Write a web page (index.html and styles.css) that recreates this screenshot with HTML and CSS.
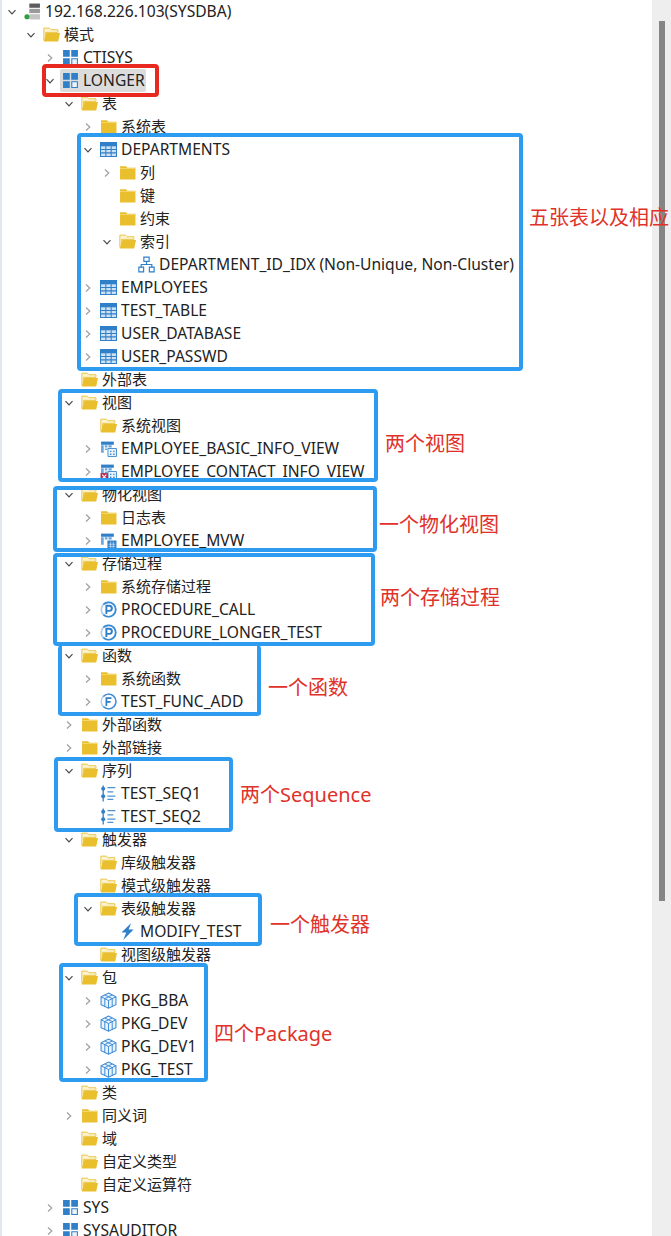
FILE: index.html
```html
<!DOCTYPE html>
<html lang="zh-CN">
<head>
<meta charset="utf-8">
<title>SYSDBA</title>
<link rel="stylesheet" href="styles.css">
</head>
<body>
<svg class="defs" width="0" height="0" aria-hidden="true">
  <symbol id="chev-d" viewBox="0 0 10 10"><path d="M1.5 3.2 5 6.8 8.5 3.2" fill="none" stroke="#4a4a4a" stroke-width="1.2"/></symbol>
  <symbol id="chev-r" viewBox="0 0 10 10"><path d="M3 1.5 6.8 5 3 8.5" fill="none" stroke="#a0a0a0" stroke-width="1.2"/></symbol>
  <symbol id="open" viewBox="0 0 16 16"><path d="M.8 2h5.200l1.500 1.500h6.500v2.500H2.500v7.500H.8z" fill="#fdf3cf" stroke="#e8c33f" stroke-width=".9"/><path d="M.8 14.500 3.200 6.500H16L14.300 14.500z" fill="#e9bf2d"/></symbol>
  <symbol id="closed" viewBox="0 0 16 16"><path d="M1 2h5.500L8 3.500h7.500v11H1z" fill="#e9bf2d"/><path d="M1 4.200h14.500" stroke="#f6dc7c" stroke-width=".8"/></symbol>
  <symbol id="schema" viewBox="0 0 16 16"><path d="M1 1h6.300v6.300H1zM8.700 1H15v6.300H8.700zM1 8.700h6.300V15H1z" fill="#2f7fc9"/><path d="M9.200 9.200h5.300v5.300H9.200z" fill="#eaf3fb" stroke="#2f7fc9"/></symbol>
  <symbol id="table" viewBox="0 0 16 16"><path d="M.5 1.500h15v13H.5z" fill="#cfe2f5" stroke="#2f7fc9"/><path d="M.5 1.500h15v3.500H.5z" fill="#2f7fc9"/><path d="M.5 8h15M.5 11.200h15M5.500 5v9.500M10.500 5v9.500" stroke="#2f7fc9"/></symbol>
  <symbol id="view" viewBox="0 0 16 16"><path d="M1 1.500h12v3H1z" fill="#2f7fc9"/><path d="M1 5h2.500v7H1zM4.500 5H7v2H4.500zM8 5h3v2H8zM4.500 8H7v1.500H4.500z" fill="#6aa5dc"/><path d="M7.500 8h8v7.500h-8z" fill="#eaf3fb" stroke="#2f7fc9" stroke-width=".8"/><path d="M9.500 10h1.200v1.200H9.500zM12.500 10h1.200v1.200h-1.200zM9.500 12.800h1.200V14H9.500zM12.500 12.800h1.200V14h-1.200z" fill="#2f7fc9"/></symbol>
  <symbol id="viewx" viewBox="0 0 16 16"><use href="#view"/><path d="M.5 9.500h7v6.500h-7z" fill="#b3294e"/><path d="M2 11 6 15M6 11 2 15" stroke="#fff" stroke-width="1"/></symbol>
  <symbol id="mview" viewBox="0 0 16 16"><path d="M1 1.500h12v3H1z" fill="#2f7fc9"/><path d="M1 5h2.500v7H1zM4.500 5H7v2H4.500zM8 5h3v2H8z" fill="#6aa5dc"/><path d="M7 8h8.500v7.500H7z" fill="#2f7fc9"/><path d="M8 11.500h6.500M8 13.500h6.500M10 9v6M12.500 9v6" stroke="#cfe3f5" stroke-width=".7"/></symbol>
  <symbol id="proc" viewBox="0 0 16 16"><circle cx="8" cy="8" r="6.800" fill="#fff" stroke="#a9cdee" stroke-width="1.600"/><path d="M3.200 3.200A6.800 6.800 0 1 1 3.200 12.800" fill="none" stroke="#3a8bd6" stroke-width="1.600"/><path d="M6 12.300V4.500h2.800a2.400 2.400 0 0 1 0 4.800H6" fill="none" stroke="#2f7fc9" stroke-width="1.800"/></symbol>
  <symbol id="func" viewBox="0 0 16 16"><circle cx="8" cy="8" r="6.900" fill="#fff" stroke="#a9cdee" stroke-width="1.300"/><path d="M3.200 3.200A6.900 6.900 0 1 1 3.200 12.800" fill="none" stroke="#3a8bd6" stroke-width="1.300"/><path d="M6 12.300V4.800h4.800M6 8.300h4" fill="none" stroke="#2f7fc9" stroke-width="1.600"/></symbol>
  <symbol id="seq" viewBox="0 0 16 16"><path d="M3 .5v15" stroke="#2f7fc9" stroke-width="1.200"/><circle cx="3" cy="3.500" r="1.900" fill="#2f7fc9"/><circle cx="3" cy="10.500" r="1.900" fill="#2f7fc9"/><path d="M7 2.500h7.500M7 6.500h5.500M7 10.500h7.500M7 13.500h5.500" stroke="#4c92d4" stroke-width="1.100"/></symbol>
  <symbol id="trig" viewBox="0 0 16 16"><path d="M11.500 0 2.300 9h4.500L4 16 13.700 6.200H9z" fill="#2f7fc9"/></symbol>
  <symbol id="pkg" viewBox="0 0 16 16"><path d="M8 1 15 4.500V12L8 15.300 1 12V4.500z" fill="#eaf3fb" stroke="#3a8bd6"/><path d="M1 4.500 8 8l7-3.500M8 8v7.300M4.500 2.800 11.500 6.200M11.500 2.800 4.500 6.200M4.500 6.200v7.500M11.500 6.200v7.500" fill="none" stroke="#3a8bd6" stroke-width=".9"/></symbol>
  <symbol id="index" viewBox="0 0 16 16"><g fill="#fff" stroke="#2f7fc9" stroke-width="1.100"><path d="M5.500 1h5v4h-5zM.8 10.500h4.500V15H.8zM10.700 10.500h4.500V15h-4.500z"/><path d="M8 5v3M3 10.500V8h10v2.500" fill="none"/></g></symbol>
  <symbol id="server" viewBox="0 0 16 16"><path d="M5 .5h10v4H5z" fill="#5c5c5c"/><path d="M5 5.500h10v4H5z" fill="#9a9a9a"/><path d="M5 10.500h10v5H5z" fill="#c4c4c4"/><circle cx="2.800" cy="13" r="2.400" fill="#2f9e41"/></symbol>
</svg>

<main class="view">
  <div class="tree">
    <div class="row l0"><svg class="chev"><use href="#chev-d"/></svg><svg class="ico"><use href="#server"/></svg><span class="en">192.168.226.103(SYSDBA)</span></div>
    <div class="row l1"><svg class="chev"><use href="#chev-d"/></svg><svg class="ico"><use href="#open"/></svg><span>模式</span></div>
    <div class="row l2"><svg class="chev"><use href="#chev-r"/></svg><svg class="ico"><use href="#schema"/></svg><span class="en">CTISYS</span></div>
    <div class="row l2"><svg class="chev"><use href="#chev-d"/></svg><div class="sel"><svg class="ico"><use href="#schema"/></svg><span class="en">LONGER</span></div></div>
    <div class="row l3"><svg class="chev"><use href="#chev-d"/></svg><svg class="ico"><use href="#open"/></svg><span>表</span></div>
    <div class="row l4"><svg class="chev"><use href="#chev-r"/></svg><svg class="ico"><use href="#closed"/></svg><span>系统表</span></div>
    <div class="row l4"><svg class="chev"><use href="#chev-d"/></svg><svg class="ico"><use href="#table"/></svg><span class="en">DEPARTMENTS</span></div>
    <div class="row l5"><svg class="chev"><use href="#chev-r"/></svg><svg class="ico"><use href="#closed"/></svg><span>列</span></div>
    <div class="row l5"><i class="chev"></i><svg class="ico"><use href="#closed"/></svg><span>键</span></div>
    <div class="row l5"><i class="chev"></i><svg class="ico"><use href="#closed"/></svg><span>约束</span></div>
    <div class="row l5"><svg class="chev"><use href="#chev-d"/></svg><svg class="ico"><use href="#open"/></svg><span>索引</span></div>
    <div class="row l6"><i class="chev"></i><svg class="ico"><use href="#index"/></svg><span class="en">DEPARTMENT_ID_IDX (Non-Unique, Non-Cluster)</span></div>
    <div class="row l4"><svg class="chev"><use href="#chev-r"/></svg><svg class="ico"><use href="#table"/></svg><span class="en">EMPLOYEES</span></div>
    <div class="row l4"><svg class="chev"><use href="#chev-r"/></svg><svg class="ico"><use href="#table"/></svg><span class="en">TEST_TABLE</span></div>
    <div class="row l4"><svg class="chev"><use href="#chev-r"/></svg><svg class="ico"><use href="#table"/></svg><span class="en">USER_DATABASE</span></div>
    <div class="row l4"><svg class="chev"><use href="#chev-r"/></svg><svg class="ico"><use href="#table"/></svg><span class="en">USER_PASSWD</span></div>
    <div class="row l3"><i class="chev"></i><svg class="ico"><use href="#open"/></svg><span>外部表</span></div>
    <div class="row l3"><svg class="chev"><use href="#chev-d"/></svg><svg class="ico"><use href="#open"/></svg><span>视图</span></div>
    <div class="row l4"><i class="chev"></i><svg class="ico"><use href="#open"/></svg><span>系统视图</span></div>
    <div class="row l4"><svg class="chev"><use href="#chev-r"/></svg><svg class="ico"><use href="#view"/></svg><span class="en">EMPLOYEE_BASIC_INFO_VIEW</span></div>
    <div class="row l4"><svg class="chev"><use href="#chev-r"/></svg><svg class="ico"><use href="#viewx"/></svg><span class="en">EMPLOYEE_CONTACT_INFO_VIEW</span></div>
    <div class="row l3"><svg class="chev"><use href="#chev-d"/></svg><svg class="ico"><use href="#open"/></svg><span>物化视图</span></div>
    <div class="row l4"><svg class="chev"><use href="#chev-r"/></svg><svg class="ico"><use href="#closed"/></svg><span>日志表</span></div>
    <div class="row l4"><svg class="chev"><use href="#chev-r"/></svg><svg class="ico"><use href="#mview"/></svg><span class="en">EMPLOYEE_MVW</span></div>
    <div class="row l3"><svg class="chev"><use href="#chev-d"/></svg><svg class="ico"><use href="#open"/></svg><span>存储过程</span></div>
    <div class="row l4"><svg class="chev"><use href="#chev-r"/></svg><svg class="ico"><use href="#closed"/></svg><span>系统存储过程</span></div>
    <div class="row l4"><svg class="chev"><use href="#chev-r"/></svg><svg class="ico"><use href="#proc"/></svg><span class="en">PROCEDURE_CALL</span></div>
    <div class="row l4"><svg class="chev"><use href="#chev-r"/></svg><svg class="ico"><use href="#proc"/></svg><span class="en">PROCEDURE_LONGER_TEST</span></div>
    <div class="row l3"><svg class="chev"><use href="#chev-d"/></svg><svg class="ico"><use href="#open"/></svg><span>函数</span></div>
    <div class="row l4"><svg class="chev"><use href="#chev-r"/></svg><svg class="ico"><use href="#closed"/></svg><span>系统函数</span></div>
    <div class="row l4"><svg class="chev"><use href="#chev-r"/></svg><svg class="ico"><use href="#func"/></svg><span class="en">TEST_FUNC_ADD</span></div>
    <div class="row l3"><svg class="chev"><use href="#chev-r"/></svg><svg class="ico"><use href="#closed"/></svg><span>外部函数</span></div>
    <div class="row l3"><svg class="chev"><use href="#chev-r"/></svg><svg class="ico"><use href="#closed"/></svg><span>外部链接</span></div>
    <div class="row l3"><svg class="chev"><use href="#chev-d"/></svg><svg class="ico"><use href="#open"/></svg><span>序列</span></div>
    <div class="row l4"><i class="chev"></i><svg class="ico"><use href="#seq"/></svg><span class="en">TEST_SEQ1</span></div>
    <div class="row l4"><i class="chev"></i><svg class="ico"><use href="#seq"/></svg><span class="en">TEST_SEQ2</span></div>
    <div class="row l3"><svg class="chev"><use href="#chev-d"/></svg><svg class="ico"><use href="#open"/></svg><span>触发器</span></div>
    <div class="row l4"><i class="chev"></i><svg class="ico"><use href="#open"/></svg><span>库级触发器</span></div>
    <div class="row l4"><i class="chev"></i><svg class="ico"><use href="#open"/></svg><span>模式级触发器</span></div>
    <div class="row l4"><svg class="chev"><use href="#chev-d"/></svg><svg class="ico"><use href="#open"/></svg><span>表级触发器</span></div>
    <div class="row l5"><i class="chev"></i><svg class="ico"><use href="#trig"/></svg><span class="en">MODIFY_TEST</span></div>
    <div class="row l4"><i class="chev"></i><svg class="ico"><use href="#open"/></svg><span>视图级触发器</span></div>
    <div class="row l3"><svg class="chev"><use href="#chev-d"/></svg><svg class="ico"><use href="#open"/></svg><span>包</span></div>
    <div class="row l4"><svg class="chev"><use href="#chev-r"/></svg><svg class="ico"><use href="#pkg"/></svg><span class="en">PKG_BBA</span></div>
    <div class="row l4"><svg class="chev"><use href="#chev-r"/></svg><svg class="ico"><use href="#pkg"/></svg><span class="en">PKG_DEV</span></div>
    <div class="row l4"><svg class="chev"><use href="#chev-r"/></svg><svg class="ico"><use href="#pkg"/></svg><span class="en">PKG_DEV1</span></div>
    <div class="row l4"><svg class="chev"><use href="#chev-r"/></svg><svg class="ico"><use href="#pkg"/></svg><span class="en">PKG_TEST</span></div>
    <div class="row l3"><i class="chev"></i><svg class="ico"><use href="#open"/></svg><span>类</span></div>
    <div class="row l3"><svg class="chev"><use href="#chev-r"/></svg><svg class="ico"><use href="#closed"/></svg><span>同义词</span></div>
    <div class="row l3"><i class="chev"></i><svg class="ico"><use href="#open"/></svg><span>域</span></div>
    <div class="row l3"><i class="chev"></i><svg class="ico"><use href="#open"/></svg><span>自定义类型</span></div>
    <div class="row l3"><i class="chev"></i><svg class="ico"><use href="#open"/></svg><span>自定义运算符</span></div>
    <div class="row l2"><svg class="chev"><use href="#chev-r"/></svg><svg class="ico"><use href="#schema"/></svg><span class="en">SYS</span></div>
    <div class="row l2"><svg class="chev"><use href="#chev-r"/></svg><svg class="ico"><use href="#schema"/></svg><span class="en">SYSAUDITOR</span></div>
  </div>

  <div class="scrollbar"><div class="thumb"></div></div>

  <div class="mark red b-longer"></div>
  <div class="mark blue b-tables"></div>
  <div class="mark blue b-views"></div>
  <div class="mark blue b-mv"></div>
  <div class="mark blue b-proc"></div>
  <div class="mark blue b-func"></div>
  <div class="mark blue b-seq"></div>
  <div class="mark blue b-trig"></div>
  <div class="mark blue b-pkg"></div>

  <div class="note n-tables">五张表以及相应</div>
  <div class="note n-views">两个视图</div>
  <div class="note n-mv">一个物化视图</div>
  <div class="note n-proc">两个存储过程</div>
  <div class="note n-func">一个函数</div>
  <div class="note n-seq">两个Sequence</div>
  <div class="note n-trig">一个触发器</div>
  <div class="note n-pkg">四个Package</div>
</main>
</body>
</html>
```
FILE: styles.css
```css
* { box-sizing: border-box; }
html, body { margin: 0; padding: 0; background: #fff; }
body { width: 671px; height: 1236px; overflow: hidden; font-family: "Noto Sans", "Noto Sans CJK SC", sans-serif; color: #222; }
.defs { position: absolute; }
.view { position: relative; width: 671px; height: 1236px; overflow: hidden; border-left: 2px solid #e3e8ee; }
.tree { display: flex; flex-direction: column; margin-left: -2px; }
.row { display: flex; align-items: center; height: 23px; font-size: 15px; line-height: 20px; white-space: nowrap; }
.row span { padding-bottom: 2px; }
.row .en { font-size: 15.6px; }
.l0 { padding-left: 7px; }
.l1 { padding-left: 26px; }
.l2 { padding-left: 45px; }
.l3 { padding-left: 64px; }
.l4 { padding-left: 83px; }
.l5 { padding-left: 102px; }
.l6 { padding-left: 121px; }
.chev { display: block; flex: none; width: 10px; height: 10px; margin-right: 7px; }
.ico { display: block; flex: none; width: 17px; height: 17px; margin-right: 4px; }
.sel { display: flex; align-items: center; height: 23px; margin-left: -2px; padding: 0 1px 0 2px; background: #dcdcdc; border-radius: 2px; }
.mark { position: absolute; border-style: solid; border-width: 4px; border-radius: 4px; }
.red { border-color: #e8291f; }
.blue { border-color: #2d9bf0; }
.b-longer { left: 40px; top: 64px; width: 117px; height: 33px; }
.b-tables { left: 75px; top: 133px; width: 446px; height: 238px; }
.b-views { left: 56px; top: 389px; width: 320px; height: 93px; }
.b-mv { left: 51px; top: 486px; width: 324px; height: 66px; }
.b-proc { left: 51px; top: 553px; width: 322px; height: 93px; }
.b-func { left: 56px; top: 645px; width: 203px; height: 71px; border-top-width: 0; }
.b-seq { left: 52px; top: 757px; width: 179px; height: 75px; }
.b-trig { left: 72px; top: 893px; width: 188px; height: 53px; }
.b-pkg { left: 57px; top: 963px; width: 149px; height: 119px; }
.note { position: absolute; font-size: 20px; line-height: 28px; color: #e0322a; white-space: nowrap; }
.n-tables { left: 527px; top: 204px; }
.n-views { left: 383px; top: 430px; }
.n-mv { left: 377px; top: 511px; }
.n-proc { left: 378px; top: 584px; }
.n-func { left: 266px; top: 674px; }
.n-seq { left: 238px; top: 781px; }
.n-trig { left: 268px; top: 911px; }
.n-pkg { left: 212px; top: 1020px; }
.scrollbar { position: absolute; left: 650px; top: 0; width: 19px; height: 1236px; background: #eeeeee; }
.thumb { margin: 21px 0 0 7px; width: 6px; height: 880px; background: #858585; }
```
